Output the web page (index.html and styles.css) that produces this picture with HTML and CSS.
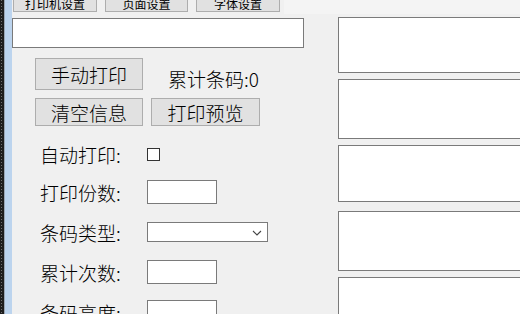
FILE: index.html
```html
<!DOCTYPE html>
<html lang="zh-CN">
<head>
    <meta charset="UTF-8">
    <title>条码打印</title>
    <link rel="stylesheet" href="styles.css">
</head>
<body>

<div class="window">
    <div class="edge">
        <div class="edge-dots"></div>
        <div class="edge-line"></div>
        <div class="edge-blue"></div>
    </div>

    <div class="main">
        <div class="toolbar">
            <button class="tool-btn">打印机设置</button>
            <button class="tool-btn">页面设置</button>
            <button class="tool-btn">字体设置</button>
            <div class="toolbar-fill"></div>
        </div>

        <div class="content">
            <div class="left-panel">
                <input class="scan-input" type="text">

                <div class="action-row">
                    <button class="btn btn-tall">手动打印</button>
                    <span class="count-label">累计条码:0</span>
                </div>
                <div class="action-row action-row-2">
                    <button class="btn">清空信息</button>
                    <button class="btn btn-wide">打印预览</button>
                </div>

                <div class="form">
                    <div class="form-row row-first">
                        <label class="form-label">自动打印:</label>
                        <span class="checkbox"></span>
                    </div>
                    <div class="form-row">
                        <label class="form-label">打印份数:</label>
                        <span class="field"></span>
                    </div>
                    <div class="form-row">
                        <label class="form-label">条码类型:</label>
                        <div class="select">
                            <svg class="chevron" width="10" height="6" viewBox="0 0 10 6">
                                <path d="M1 1 L5 5 L9 1" fill="none" stroke="#444" stroke-width="1.1"/>
                            </svg>
                        </div>
                    </div>
                    <div class="form-row">
                        <label class="form-label">累计次数:</label>
                        <span class="field"></span>
                    </div>
                    <div class="form-row">
                        <label class="form-label">条码高度:</label>
                        <span class="field"></span>
                    </div>
                </div>
            </div>

            <div class="right-panel">
                <div class="box box-1"></div>
                <div class="box box-2"></div>
                <div class="box box-3"></div>
                <div class="box box-4"></div>
                <div class="box box-5"></div>
            </div>
        </div>
    </div>
</div>

</body>
</html>
```

FILE: styles.css
```css
* {
    box-sizing: border-box;
}

body {
    margin: 0;
    width: 520px;
    height: 314px;
    overflow: hidden;
    background: #f0f0f0;
    font-family: "Noto Sans CJK SC", "Liberation Sans", sans-serif;
    font-weight: 300;
    color: #000;
}

.window {
    display: flex;
    height: 314px;
    overflow: hidden;
}

/* left window edge */
.edge {
    display: flex;
    flex: 0 0 12px;
}

.edge-dots {
    width: 4px;
    background: repeating-linear-gradient(to bottom, #6e6e6e 0 1px, #1e1e1e 1px 3px);
    border-left: 1px solid #1e1e1e;
    border-right: 2px solid #1e1e1e;
}

.edge-line {
    width: 1px;
    background: #9aa6b4;
}

.edge-blue {
    width: 7px;
    background: #bcd4ee;
}

.main {
    flex: 1;
    display: flex;
    flex-direction: column;
    min-width: 0;
}

/* top toolbar, cut off by the window */
.toolbar {
    display: flex;
    flex: 0 0 14px;
    height: 14px;
    overflow: hidden;
    padding-left: 1px;
    gap: 8px;
}

.tool-btn {
    flex: 0 0 84px;
    height: 23px;
    margin-top: -11px;
    padding: 6px 0 0;
    background: #e1e1e1;
    border: 1px solid #adadad;
    font-family: inherit;
    font-weight: 400;
    font-size: 12px;
    line-height: 15px;
    color: #000;
}

.tool-btn:nth-child(2) {
    flex-basis: 83px;
}

.toolbar-fill {
    flex: 1;
    margin-left: -4px;
    background: #f4f4f4;
}

.content {
    display: flex;
    flex: 1;
    min-height: 0;
    overflow: hidden;
}

.left-panel {
    flex: 0 0 326px;
}

.scan-input {
    display: block;
    width: 292px;
    height: 30px;
    margin-top: 4px;
    border: 1px solid #7a7a7a;
    background: #fff;
    outline: none;
}

.action-row {
    display: flex;
    align-items: center;
    margin-top: 10px;
    padding-left: 23px;
    gap: 8px;
}

.action-row-2 {
    margin-top: 8px;
}

.btn {
    width: 108px;
    height: 28px;
    padding: 0;
    background: #e1e1e1;
    border: 1px solid #adadad;
    font-family: inherit;
    font-weight: 300;
    font-size: 19px;
    line-height: 1;
    color: #000;
}

.btn-tall {
    height: 32px;
}

.btn-wide {
    width: 109px;
}

.count-label {
    margin-left: 17px;
    margin-top: 8px;
    font-size: 19px;
    line-height: 1;
}

.form {
    margin-top: 10px;
}

.form-row {
    display: flex;
    align-items: center;
    height: 40px;
    padding-left: 28px;
}

.row-first {
    height: 36px;
}

.form-label {
    width: 107px;
    font-size: 19px;
    line-height: 1;
}

.checkbox {
    width: 13px;
    height: 13px;
    border: 1px solid #333;
    background: #fff;
}

.field {
    width: 70px;
    height: 24px;
    border: 1px solid #7a7a7a;
    background: #fff;
}

.select {
    position: relative;
    width: 121px;
    height: 20px;
    border: 1px solid #7a7a7a;
    background: #fff;
}

.chevron {
    position: absolute;
    right: 5px;
    top: 7px;
}

/* right column of text boxes */
.right-panel {
    flex: 1;
    overflow: hidden;
    padding-top: 3px;
}

.box {
    width: 200px;
    height: 60px;
    margin-top: 6px;
    border: 1px solid #7a7a7a;
    background: #fff;
}

.box-1 {
    height: 56px;
    margin-top: 0;
}

.box-3 {
    height: 57px;
}

.box-4 {
    margin-top: 9px;
}
```
